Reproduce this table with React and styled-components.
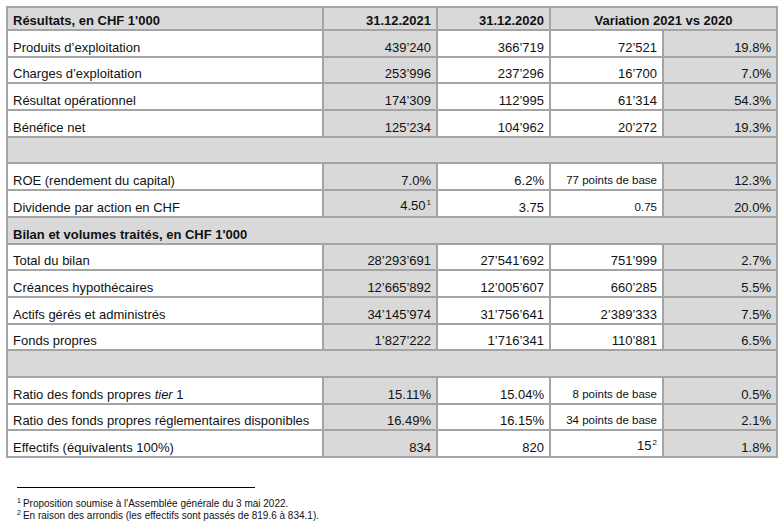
import React from "react";
import styled, { createGlobalStyle, css } from "styled-components";

const GlobalStyle = createGlobalStyle`
  html, body { margin: 0; padding: 0; background: #ffffff; }
  body {
    font-family: "Liberation Sans", Arial, sans-serif;
    color: #111111;
  }
`;

const Page = styled.div`
  width: 783px;
  height: 524px;
  padding: 6px 0 0 6px;
  box-sizing: border-box;
`;

const Grid = styled.div`
  display: grid;
  grid-template-columns: 314px 112px 111px 111px 112px;
  grid-template-rows: 21px;
  grid-auto-rows: 24.7px;
  gap: 2px;
  padding: 2px;
  background: #a4a4a4;
  width: max-content;
`;

const Cell = styled.div`
  display: flex;
  align-items: flex-end;
  padding: 0 5px 2px 5px;
  box-sizing: border-box;
  background: ${(p) => (p.$gray ? "#d9d9d9" : "#ffffff")};
  font-size: ${(p) => (p.$small ? "11.5px" : "13px")};
  line-height: 13px;
  font-weight: ${(p) => (p.$bold ? 700 : 400)};
  white-space: nowrap;
  justify-content: ${(p) =>
    p.$align === "right" ? "flex-end" : p.$align === "center" ? "center" : "flex-start"};
  ${(p) =>
    p.$span &&
    css`
      grid-column: span ${p.$span};
    `}
`;

const Text = styled.span`
  display: inline-block;
`;

const Sup = styled.span`
  font-size: 8px;
  position: relative;
  top: -5px;
  margin-left: 1px;
`;

const Footer = styled.div`
  margin-top: 29px;
  padding-left: 11px;
`;

const Rule = styled.div`
  width: 238px;
  height: 1px;
  background: #000000;
  margin-bottom: 10px;
`;

const Note = styled.div`
  font-size: 10px;
  line-height: 11px;
  color: #111111;
  white-space: nowrap;
`;

const NoteMark = styled.span`
  font-size: 7px;
  position: relative;
  top: -4px;
  margin-right: 2px;
`;

const rows = [
  { type: "data", label: "Produits d’exploitation", v: ["439’240", "366’719", "72’521", "19.8%"] },
  { type: "data", label: "Charges d’exploitation", v: ["253’996", "237’296", "16’700", "7.0%"] },
  { type: "data", label: "Résultat opérationnel", v: ["174’309", "112’995", "61’314", "54.3%"] },
  { type: "data", label: "Bénéfice net", v: ["125’234", "104’962", "20’272", "19.3%"] },
  { type: "empty" },
  { type: "data", label: "ROE (rendement du capital)", v: ["7.0%", "6.2%", "77 points de base", "12.3%"], small: true },
  { type: "data", label: "Dividende par action en CHF", v: ["4.50", "3.75", "0.75", "20.0%"], small: true, sup0: "1" },
  { type: "section", label: "Bilan et volumes traités, en CHF 1'000" },
  { type: "data", label: "Total du bilan", v: ["28’293’691", "27’541’692", "751’999", "2.7%"] },
  { type: "data", label: "Créances hypothécaires", v: ["12’665’892", "12’005’607", "660’285", "5.5%"] },
  { type: "data", label: "Actifs gérés et administrés", v: ["34’145’974", "31’756’641", "2’389’333", "7.5%"] },
  { type: "data", label: "Fonds propres", v: ["1’827’222", "1’716’341", "110’881", "6.5%"] },
  { type: "empty" },
  {
    type: "data",
    label: (
      <>
        Ratio des fonds propres <i>tier</i> 1
      </>
    ),
    v: ["15.11%", "15.04%", "8 points de base", "0.5%"],
    small: true,
  },
  { type: "data", label: "Ratio des fonds propres réglementaires disponibles", v: ["16.49%", "16.15%", "34 points de base", "2.1%"], small: true },
  { type: "data", label: "Effectifs (équivalents 100%)", v: ["834", "820", "15", "1.8%"], sup2: "2" },
];

export default function App() {
  return (
    <>
      <GlobalStyle />
      <Page>
        <Grid>
          <Cell $gray $bold>
            <Text>Résultats, en CHF 1'000</Text>
          </Cell>
          <Cell $gray $bold $align="right">
            <Text>31.12.2021</Text>
          </Cell>
          <Cell $gray $bold $align="right">
            <Text>31.12.2020</Text>
          </Cell>
          <Cell $gray $bold $align="center" $span={2}>
            <Text>Variation 2021 vs 2020</Text>
          </Cell>
          {rows.map((r, i) => {
            if (r.type === "empty") return <Cell key={i} $gray $span={5} />;
            if (r.type === "section")
              return (
                <Cell key={i} $gray $bold $span={5}>
                  <Text>{r.label}</Text>
                </Cell>
              );
            return (
              <React.Fragment key={i}>
                <Cell>
                  <Text>{r.label}</Text>
                </Cell>
                <Cell $gray $align="right">
                  <Text>
                    {r.v[0]}
                    {r.sup0 && <Sup>{r.sup0}</Sup>}
                  </Text>
                </Cell>
                <Cell $align="right">
                  <Text>{r.v[1]}</Text>
                </Cell>
                <Cell $align="right" $small={r.small}>
                  <Text>
                    {r.v[2]}
                    {r.sup2 && <Sup>{r.sup2}</Sup>}
                  </Text>
                </Cell>
                <Cell $gray $align="right">
                  <Text>{r.v[3]}</Text>
                </Cell>
              </React.Fragment>
            );
          })}
        </Grid>
        <Footer>
          <Rule />
          <Note>
            <NoteMark>1</NoteMark>Proposition soumise à l'Assemblée générale du 3 mai 2022.
          </Note>
          <Note>
            <NoteMark>2</NoteMark>En raison des arrondis (les effectifs sont passés de 819.6 à 834.1).
          </Note>
        </Footer>
      </Page>
    </>
  );
}
